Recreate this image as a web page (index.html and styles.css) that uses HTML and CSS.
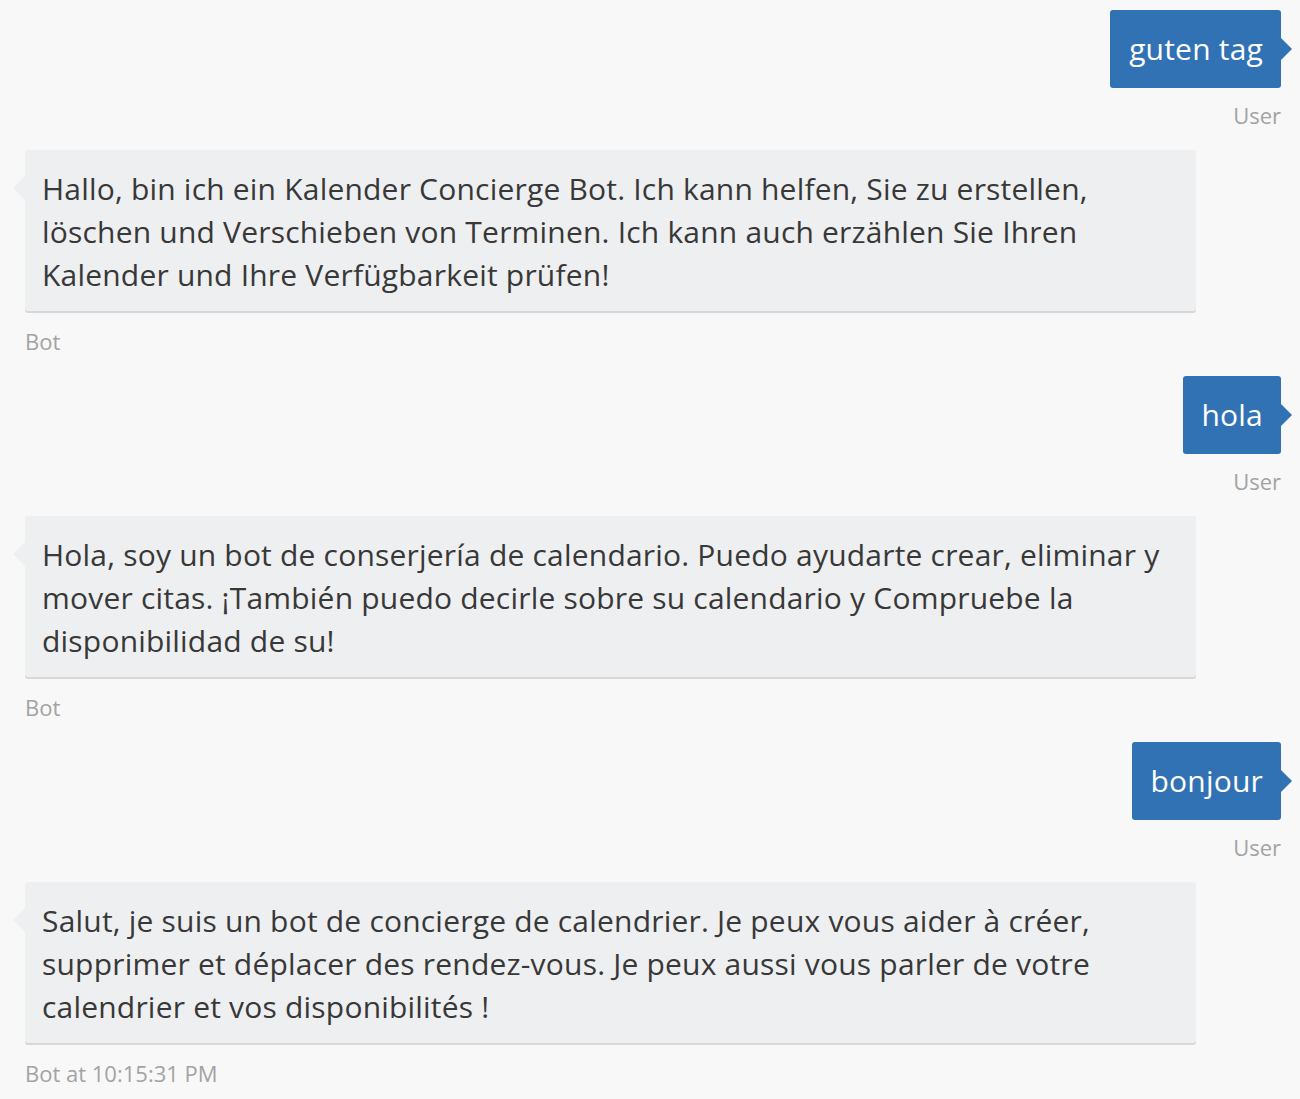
FILE: index.html
```html
<!DOCTYPE html>
<html>
<head>
<meta charset="utf-8">
<link rel="stylesheet" href="styles.css">
</head>
<body>
<div class="chat">
  <div class="msg user">
    <div class="bubble">guten tag</div>
    <div class="label">User</div>
  </div>
  <div class="msg bot">
    <div class="bubble">Hallo, bin ich ein Kalender Concierge Bot. Ich kann helfen, Sie zu erstellen,<br>löschen und Verschieben von Terminen. Ich kann auch erzählen Sie Ihren<br>Kalender und Ihre Verfügbarkeit prüfen!</div>
    <div class="label">Bot</div>
  </div>
  <div class="msg user">
    <div class="bubble">hola</div>
    <div class="label">User</div>
  </div>
  <div class="msg bot">
    <div class="bubble">Hola, soy un bot de conserjería de calendario. Puedo ayudarte crear, eliminar y<br>mover citas. ¡También puedo decirle sobre su calendario y Compruebe la<br>disponibilidad de su!</div>
    <div class="label">Bot</div>
  </div>
  <div class="msg user">
    <div class="bubble">bonjour</div>
    <div class="label">User</div>
  </div>
  <div class="msg bot">
    <div class="bubble">Salut, je suis un bot de concierge de calendrier. Je peux vous aider à créer,<br>supprimer et déplacer des rendez-vous. Je peux aussi vous parler de votre<br>calendrier et vos disponibilités !</div>
    <div class="label">Bot at 10:15:31 PM</div>
  </div>
</div>
</body>
</html>
```
FILE: styles.css
```css
html, body {
  margin: 0;
  padding: 0;
  background: #f8f8f8;
}
body {
  font-family: "Open Sans", Lato, sans-serif;
  color: #333;
}
.chat {
  display: flex;
  flex-direction: column;
  gap: 20px;
  padding: 10px 19px 0 25px;
}
.msg {
  display: flex;
  flex-direction: column;
  gap: 12px;
}
.msg.user {
  align-items: flex-end;
}
.msg.bot {
  align-items: flex-start;
  gap: 15px;
}
.bubble {
  position: relative;
  font-size: 30px;
  line-height: 43px;
  letter-spacing: 0.2px;
  border-radius: 3px;
  white-space: nowrap;
}
.user .bubble {
  background: #3172b5;
  color: #fff;
  padding: 17px 18px 18px 19px;
}
.user .bubble::after {
  content: "";
  position: absolute;
  right: -11px;
  top: 28px;
  border-left: 11px solid #3172b5;
  border-top: 11px solid transparent;
  border-bottom: 11px solid transparent;
}
.bot .bubble {
  background: #eeeff1;
  width: 1171px;
  box-sizing: border-box;
  padding: 17px 17px 15px 17px;
  box-shadow: 0 2px 0 #d6d7d9;
  color: #383838;
}
.bot .bubble::before {
  content: "";
  position: absolute;
  left: -12px;
  top: 26px;
  border-right: 12px solid #eeeff1;
  border-top: 12px solid transparent;
  border-bottom: 12px solid transparent;
}
.label {
  font-size: 22px;
  line-height: 30px;
  color: #a3a3a3;
}
```
